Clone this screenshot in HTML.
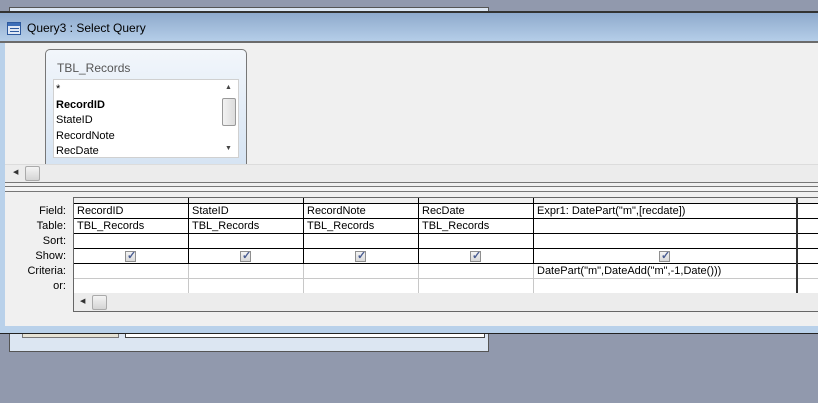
<!DOCTYPE html>
<html><head><style>
*{margin:0;padding:0;box-sizing:border-box}
body{width:818px;height:403px;background:#9199ad;position:relative;overflow:hidden;font-family:"Liberation Sans",sans-serif;font-size:11px;color:#000}
.a{position:absolute}
.cell{position:absolute;height:15px;line-height:14px;padding-left:3px;white-space:nowrap}
.lbl{position:absolute;left:0;width:66px;text-align:right;height:15px;line-height:15px}
.cb{position:absolute;width:11px;height:11px;border:1px solid #8f8f8f;background:linear-gradient(#f4f4f4,#d8d8d8)}
.cb:after{content:"✓";position:absolute;left:1px;top:-3px;font-size:11px;font-weight:bold;color:#4a5d92}
</style></head><body>
<!-- back window -->
<div class="a" style="left:9px;top:7px;width:480px;height:345px;border:1px solid #555;background:#dce6f2"></div>
<div class="a" style="left:22px;top:300px;width:97px;height:38px;border:1px solid #777;background:#e6e3d6"></div>
<div class="a" style="left:125px;top:300px;width:360px;height:38px;border:1px solid #444;background:#fff"></div>
<!-- main window -->
<div class="a" style="left:0;top:11px;width:818px;height:323px;background:#b9d1ea;border-top:2px solid #333;border-bottom:1px solid #222"></div>
<div class="a" style="left:0;top:13px;width:818px;height:29px;background:linear-gradient(#8faacd,#b6cfe9)"></div>
<div class="a" style="left:0;top:41px;width:818px;height:2px;background:#6b6b6b"></div>
<svg class="a" style="left:7px;top:22px" width="14" height="13"><rect x="0.5" y="0.5" width="13" height="12" fill="#dfe8f5" stroke="#2e5a9e"/><rect x="1" y="1" width="12" height="3" fill="#3d6fb8"/><rect x="3" y="6" width="9" height="1" fill="#2e5a9e"/><rect x="3" y="9" width="9" height="1" fill="#2e5a9e"/></svg>
<div class="a" style="left:27px;top:21px;font-size:12px">Query3 : Select Query</div>
<div class="a" style="left:5px;top:43px;width:813px;height:283px;background:#f0f0f0"></div>
<!-- upper pane -->
<div class="a" style="left:45px;top:49px;width:202px;height:115px;border:1px solid #777;border-bottom:none;border-radius:5px 5px 0 0;background:linear-gradient(#f2f6fb,#d6e4f3)"></div>
<div class="a" style="left:57px;top:61px;color:#555;font-size:12px">TBL_Records</div>
<div class="a" style="left:53px;top:79px;width:186px;height:79px;border:1px solid #d0d0d0;background:#fff"></div>
<div class="a" style="left:56px;top:82px;line-height:15.5px">*<br><b>RecordID</b><br>StateID<br>RecordNote<br>RecDate</div>
<div class="a" style="left:221px;top:80px;width:17px;height:77px;background:#fff"></div>
<div class="a" style="left:225px;top:84px;font-size:7px;color:#444">▲</div>
<div class="a" style="left:222px;top:98px;width:14px;height:28px;border:1px solid #999;border-radius:2px;background:linear-gradient(90deg,#f2f2f2,#dcdcdc)"></div>
<div class="a" style="left:225px;top:145px;font-size:7px;color:#444">▼</div>
<div class="a" style="left:5px;top:164px;width:813px;height:18px;background:#ececec;border-top:1px solid #dcdcdc"></div>
<div class="a" style="left:13px;top:168px;font-size:7px;color:#333">◀</div>
<div class="a" style="left:25px;top:166px;width:15px;height:15px;border:1px solid #aaa;border-radius:2px;background:linear-gradient(#f4f4f4,#d4d4d4)"></div>
<div class="a" style="left:5px;top:182px;width:813px;height:1px;background:#777"></div>
<div class="a" style="left:5px;top:186px;width:813px;height:6px;border-top:1px solid #777;border-bottom:1px solid #777;background:#f4f4f4"></div>
<!-- grid -->
<div class="a" style="left:73px;top:197px;width:745px;height:115px;border:1px solid #666;border-right:none;background:#fff"></div>
<div class="a" style="left:74px;top:198px;width:744px;height:6px;background:#f0f0f0"></div>
<div class="a" style="left:74px;top:293px;width:744px;height:18px;background:#ececec"></div>
<div class="a" style="left:80px;top:297px;font-size:7px;color:#333">◀</div>
<div class="a" style="left:92px;top:295px;width:15px;height:15px;border:1px solid #aaa;border-radius:2px;background:linear-gradient(#f4f4f4,#d4d4d4)"></div>
<!-- row lines -->
<div class="a" style="left:74px;top:203px;width:744px;height:1px;background:#000"></div>
<div class="a" style="left:74px;top:218px;width:744px;height:1px;background:#000"></div>
<div class="a" style="left:74px;top:233px;width:744px;height:1px;background:#000"></div>
<div class="a" style="left:74px;top:248px;width:744px;height:1px;background:#000"></div>
<div class="a" style="left:74px;top:263px;width:744px;height:1px;background:#000"></div>
<div class="a" style="left:74px;top:278px;width:744px;height:1px;background:#c8c8c8"></div>
<!-- column lines -->
<div class="a" style="left:188px;top:198px;width:1px;height:66px;background:#000"></div>
<div class="a" style="left:303px;top:198px;width:1px;height:66px;background:#000"></div>
<div class="a" style="left:418px;top:198px;width:1px;height:66px;background:#000"></div>
<div class="a" style="left:533px;top:198px;width:1px;height:66px;background:#000"></div>
<div class="a" style="left:796px;top:198px;width:2px;height:95px;background:#333"></div>
<div class="a" style="left:188px;top:264px;width:1px;height:29px;background:#c8c8c8"></div>
<div class="a" style="left:303px;top:264px;width:1px;height:29px;background:#c8c8c8"></div>
<div class="a" style="left:418px;top:264px;width:1px;height:29px;background:#c8c8c8"></div>
<div class="a" style="left:533px;top:264px;width:1px;height:29px;background:#c8c8c8"></div>
<!-- labels -->
<div class="lbl" style="top:204px">Field:</div>
<div class="lbl" style="top:219px">Table:</div>
<div class="lbl" style="top:234px">Sort:</div>
<div class="lbl" style="top:249px">Show:</div>
<div class="lbl" style="top:264px">Criteria:</div>
<div class="lbl" style="top:279px">or:</div>
<!-- cells -->
<div class="cell" style="left:74px;top:204px">RecordID</div>
<div class="cell" style="left:189px;top:204px">StateID</div>
<div class="cell" style="left:304px;top:204px">RecordNote</div>
<div class="cell" style="left:419px;top:204px">RecDate</div>
<div class="cell" style="left:534px;top:204px">Expr1: DatePart("m",[recdate])</div>
<div class="cell" style="left:74px;top:219px">TBL_Records</div>
<div class="cell" style="left:189px;top:219px">TBL_Records</div>
<div class="cell" style="left:304px;top:219px">TBL_Records</div>
<div class="cell" style="left:419px;top:219px">TBL_Records</div>
<div class="cb" style="left:125px;top:251px"></div>
<div class="cb" style="left:240px;top:251px"></div>
<div class="cb" style="left:355px;top:251px"></div>
<div class="cb" style="left:470px;top:251px"></div>
<div class="cb" style="left:659px;top:251px"></div>
<div class="cell" style="left:534px;top:264px">DatePart("m",DateAdd("m",-1,Date()))</div>
</body></html>
